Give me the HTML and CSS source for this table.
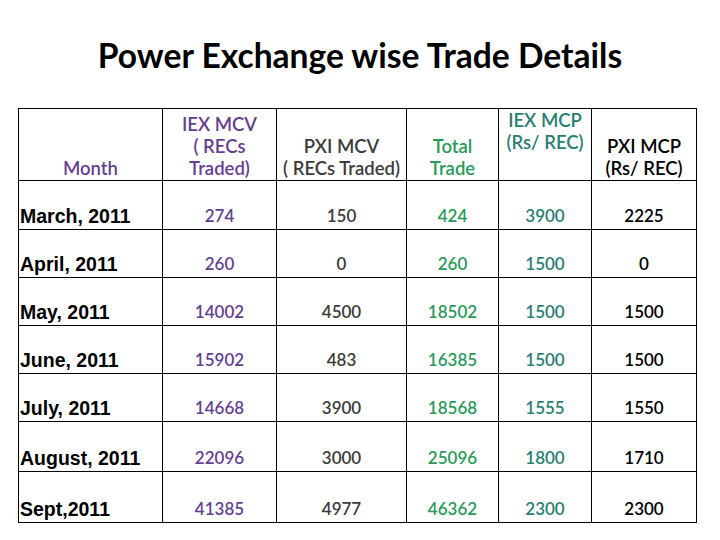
FILE: index.html
```html
<!DOCTYPE html>
<html>
<head>
<meta charset="utf-8">
<link rel="stylesheet" href="styles.css">
</head>
<body>
<h1 class="title">Power Exchange wise Trade Details</h1>
<table class="trade">
  <colgroup>
    <col class="c-month"><col class="c-iexv"><col class="c-pxiv"><col class="c-total"><col class="c-iexp"><col class="c-pxip">
  </colgroup>
  <thead>
    <tr class="head">
      <th class="h-month purple">Month</th>
      <th class="purple">IEX MCV<br>( RECs<br>Traded)</th>
      <th class="grey">PXI MCV<br>( RECs Traded)</th>
      <th class="green">Total<br>Trade</th>
      <th class="teal top">IEX MCP<br>(Rs/ REC)</th>
      <th class="black">PXI MCP<br>(Rs/ REC)</th>
    </tr>
  </thead>
  <tbody>
    <tr class="r1"><td class="month">March, 2011</td><td class="purple">274</td><td class="grey">150</td><td class="green">424</td><td class="teal">3900</td><td class="black">2225</td></tr>
    <tr class="r2"><td class="month">April, 2011</td><td class="purple">260</td><td class="grey">0</td><td class="green">260</td><td class="teal">1500</td><td class="black">0</td></tr>
    <tr class="r3"><td class="month">May, 2011</td><td class="purple">14002</td><td class="grey">4500</td><td class="green">18502</td><td class="teal">1500</td><td class="black">1500</td></tr>
    <tr class="r4"><td class="month">June, 2011</td><td class="purple">15902</td><td class="grey">483</td><td class="green">16385</td><td class="teal">1500</td><td class="black">1500</td></tr>
    <tr class="r5"><td class="month">July, 2011</td><td class="purple">14668</td><td class="grey">3900</td><td class="green">18568</td><td class="teal">1555</td><td class="black">1550</td></tr>
    <tr class="r6"><td class="month">August, 2011</td><td class="purple">22096</td><td class="grey">3000</td><td class="green">25096</td><td class="teal">1800</td><td class="black">1710</td></tr>
    <tr class="r7"><td class="month">Sept,2011</td><td class="purple">41385</td><td class="grey">4977</td><td class="green">46362</td><td class="teal">2300</td><td class="black">2300</td></tr>
  </tbody>
</table>
</body>
</html>
```
FILE: styles.css
```css
html, body {
  margin: 0;
  padding: 0;
  background: #ffffff;
}
body {
  width: 720px;
  height: 540px;
  overflow: hidden;
  font-family: Lato, "Open Sans", sans-serif;
}
.title {
  margin: 0;
  padding-top: 37px;
  height: 108px;
  box-sizing: border-box;
  text-align: center;
  font-family: Lato, sans-serif;
  font-weight: 700;
  font-size: 33.6px;
  line-height: 36px;
  color: #000;
}
.trade {
  margin-left: 18px;
  border-collapse: collapse;
  table-layout: fixed;
  width: 678px;
}
.c-month { width: 144px; }
.c-iexv { width: 114px; }
.c-pxiv { width: 130px; }
.c-total { width: 92px; }
.c-iexp { width: 93px; }
.c-pxip { width: 105px; }

.trade th, .trade td {
  border: 1.5px solid #000;
  padding: 0 0 2px 0;
  text-align: center;
  vertical-align: bottom;
  font-size: 17px;
  line-height: 22px;
  font-weight: 600;
}
.head { height: 72px; }
.trade .head th {
  padding-bottom: 1px;
  font-size: 18.5px;
  line-height: 22px;
}
.trade .head th.top { vertical-align: top; padding-top: 0; }

.trade td.month {
  text-align: left;
  padding-left: 1px;
  font-family: "Liberation Sans", Arial, sans-serif;
  font-weight: 700;
  font-size: 19.5px;
  color: #000;
}
.r1 { height: 49px; }
.r2, .r3, .r4, .r5 { height: 48px; }
.r6 { height: 50px; }
.r7 { height: 51px; }

.purple { color: #653f91; }
.grey { color: #3c3c3c; }
.green { color: #2a9a5a; }
.teal { color: #2a7e73; }
.black { color: #000; }
```
